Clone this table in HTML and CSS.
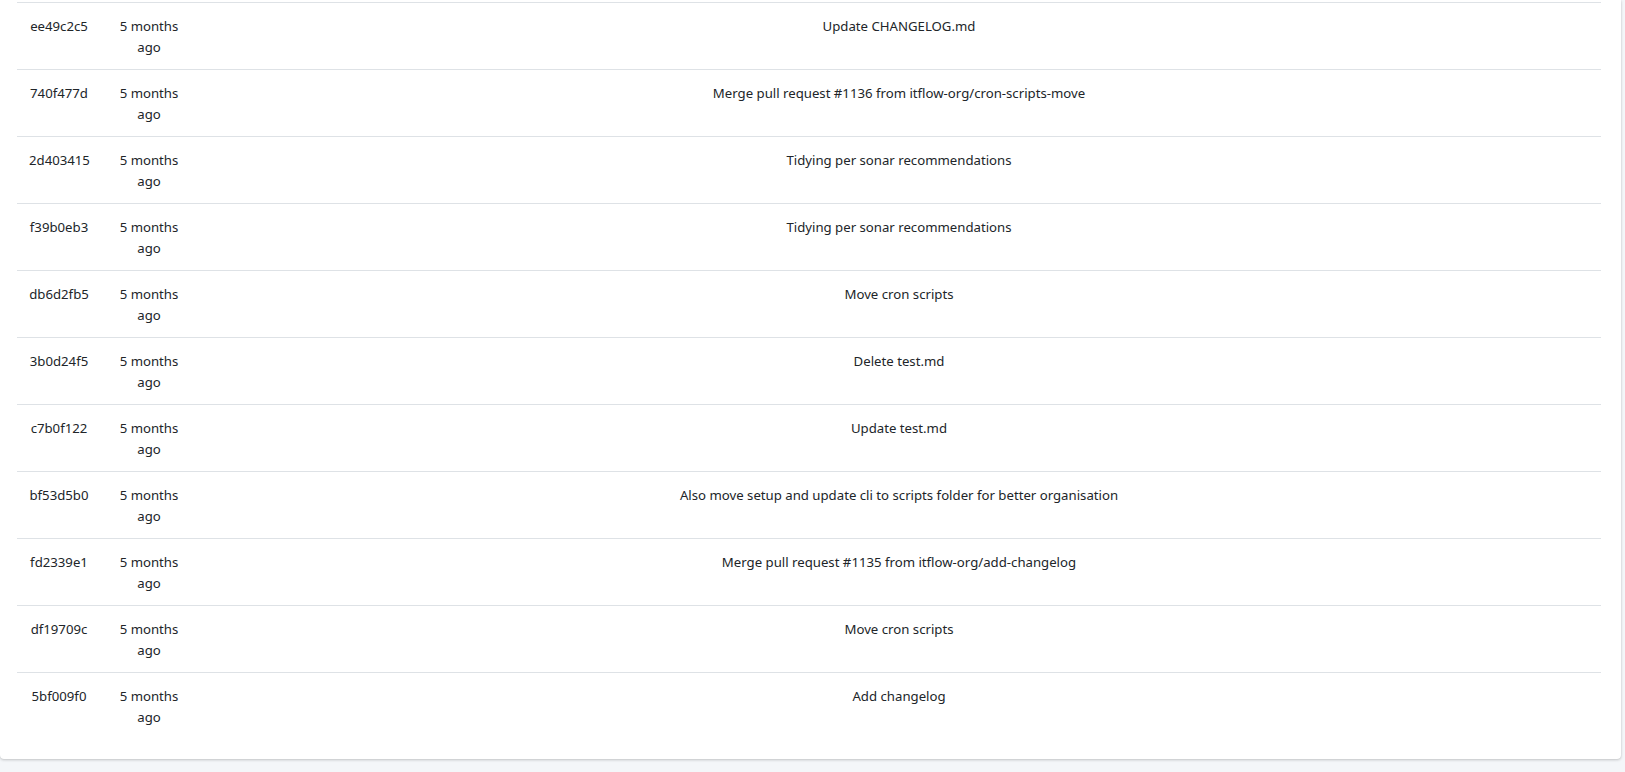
FILE: index.html
```html
<!DOCTYPE html>
<html lang="en">
<head>
<meta charset="utf-8">
<title>Commits</title>
<link rel="stylesheet" href="styles.css">
</head>
<body>
<div class="wrapper">
  <div class="card">
    <table class="commits">
      <colgroup>
        <col class="col-hash">
        <col class="col-time">
        <col>
      </colgroup>
      <tbody>
        <tr><td>ee49c2c5</td><td>5 months ago</td><td>Update CHANGELOG.md</td></tr>
        <tr><td>740f477d</td><td>5 months ago</td><td>Merge pull request #1136 from itflow-org/cron-scripts-move</td></tr>
        <tr><td>2d403415</td><td>5 months ago</td><td>Tidying per sonar recommendations</td></tr>
        <tr><td>f39b0eb3</td><td>5 months ago</td><td>Tidying per sonar recommendations</td></tr>
        <tr><td>db6d2fb5</td><td>5 months ago</td><td>Move cron scripts</td></tr>
        <tr><td>3b0d24f5</td><td>5 months ago</td><td>Delete test.md</td></tr>
        <tr><td>c7b0f122</td><td>5 months ago</td><td>Update test.md</td></tr>
        <tr><td>bf53d5b0</td><td>5 months ago</td><td>Also move setup and update cli to scripts folder for better organisation</td></tr>
        <tr><td>fd2339e1</td><td>5 months ago</td><td>Merge pull request #1135 from itflow-org/add-changelog</td></tr>
        <tr><td>df19709c</td><td>5 months ago</td><td>Move cron scripts</td></tr>
        <tr><td>5bf009f0</td><td>5 months ago</td><td>Add changelog</td></tr>
      </tbody>
    </table>
  </div>
</div>
</body>
</html>
```
FILE: styles.css
```css
html, body {
  margin: 0;
  padding: 0;
}
body {
  background: #f4f6f9;
  font-family: "Noto Sans", "Open Sans", sans-serif;
  font-size: 13.2px;
  line-height: 21px;
  color: #212529;
  height: 772px;
  overflow: hidden;
}
.wrapper {
  padding-right: 4px;
}
.card {
  background: #fff;
  padding: 2px 20px 20px 17px;
  border-radius: 0 0 4px 4px;
  box-shadow: 0 0 1px rgba(0,0,0,.125), 0 1px 3px rgba(0,0,0,.2);
}
.commits {
  width: 100%;
  border-collapse: collapse;
  table-layout: fixed;
}
.col-hash { width: 84px; }
.col-time { width: 96px; }
.commits td {
  border-top: 1px solid #dee2e6;
  padding: 13px 12px 11px;
  text-align: center;
  vertical-align: top;
}
```
